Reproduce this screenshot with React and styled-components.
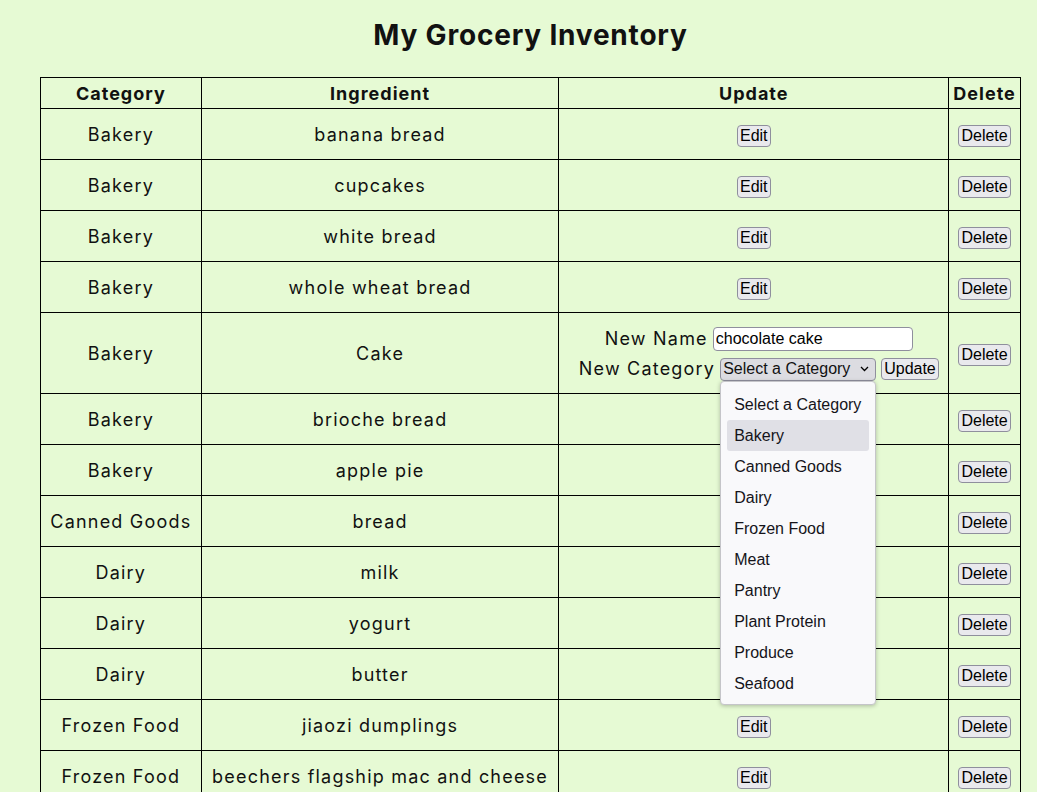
import React from "react"
import styled, { createGlobalStyle } from "styled-components"

const GlobalStyle = createGlobalStyle`
  html, body {
    margin: 0;
    overflow: hidden;
    background-color: #e6fad4;
  }
  body {
    font-family: "Inter", "Noto Sans", sans-serif;
    color: #111;
  }
`

const Page = styled.div`
  padding: 0 16px 0 40px;
`

const Title = styled.h1`
  font-size: 28px;
  font-weight: 700;
  line-height: 34px;
  margin: 18px 0 25px;
  text-align: center;
  letter-spacing: 0.8px;
`

const Table = styled.table`
  border-collapse: collapse;
  table-layout: fixed;
  font-size: 18px;
`

const Head = styled.th`
  border: 1px solid #000;
  font-weight: 700;
  line-height: 24px;
  padding: 4px 0 2px;
  letter-spacing: 1px;
  width: ${(p) => p.$w}px;
`

const Cell = styled.td`
  border: 1px solid #000;
  line-height: 24px;
  padding: 14px 0 12px;
  text-align: center;
  vertical-align: middle;
  white-space: nowrap;
  letter-spacing: 1.2px;
`

const NativeButton = styled.button`
  font-family: "Liberation Sans", Arial, sans-serif;
  font-size: 16px;
  line-height: 18px;
  letter-spacing: 0;
  color: #000;
  background-color: #e9e9ed;
  border: 1px solid #8f8f9d;
  border-radius: 4px;
  padding: 1px 2px;
  cursor: pointer;
`

const UpdateForm = styled.div`
  display: flex;
  flex-direction: column;
  align-items: center;
  gap: 6px;
`

const FieldRow = styled.div`
  display: flex;
  align-items: center;
  gap: 5px;
  padding-left: 10px;
`

const Label = styled.span`
  letter-spacing: 1.2px;
`

const TextInput = styled.input`
  width: 200px;
  height: 24px;
  box-sizing: border-box;
  font-family: "Liberation Sans", Arial, sans-serif;
  font-size: 16px;
  color: #000;
  background: #fff;
  border: 1px solid #8f8f9d;
  border-radius: 4px;
  padding: 0 2px;
`

const SelectWrap = styled.div`
  position: relative;
`

const SelectBox = styled.div`
  width: 156px;
  height: 23px;
  box-sizing: border-box;
  display: flex;
  align-items: center;
  justify-content: space-between;
  padding: 0 6px 0 2px;
  font-family: "Liberation Sans", Arial, sans-serif;
  font-size: 16px;
  letter-spacing: 0;
  background-color: #dcdce1;
  border: 1px solid #8f8f9d;
  border-radius: 4px;
`

const Popup = styled.ul`
  position: absolute;
  top: 23px;
  left: 0;
  width: 156px;
  box-sizing: border-box;
  margin: 0;
  padding: 7px 6px 5px;
  list-style: none;
  background: #f9f9fb;
  border: 1px solid #c5c5c9;
  border-radius: 4px;
  box-shadow: 0 1px 4px rgba(0, 0, 0, 0.25);
  z-index: 5;
  text-align: left;
`

const Option = styled.li`
  height: 31px;
  line-height: 31px;
  padding-left: 7px;
  border-radius: 3px;
  font-family: "Liberation Sans", Arial, sans-serif;
  font-size: 16px;
  letter-spacing: 0;
  color: #15141a;
  background: ${(p) => (p.$active ? "#e0e0e6" : "transparent")};
`

const categories = [
  "Select a Category",
  "Bakery",
  "Canned Goods",
  "Dairy",
  "Frozen Food",
  "Meat",
  "Pantry",
  "Plant Protein",
  "Produce",
  "Seafood",
]

const items = [
  { category: "Bakery", name: "banana bread" },
  { category: "Bakery", name: "cupcakes" },
  { category: "Bakery", name: "white bread" },
  { category: "Bakery", name: "whole wheat bread" },
  { category: "Bakery", name: "Cake", editing: true },
  { category: "Bakery", name: "brioche bread" },
  { category: "Bakery", name: "apple pie" },
  { category: "Canned Goods", name: "bread" },
  { category: "Dairy", name: "milk" },
  { category: "Dairy", name: "yogurt" },
  { category: "Dairy", name: "butter" },
  { category: "Frozen Food", name: "jiaozi dumplings" },
  { category: "Frozen Food", name: "beechers flagship mac and cheese" },
  { category: "Meat", name: "chicken thighs" },
]

function Chevron() {
  return (
    <svg width="9" height="6" viewBox="0 0 9 6">
      <path d="M1 1l3.5 3.5L8 1" fill="none" stroke="#000" strokeWidth="1.3" />
    </svg>
  )
}

function EditForm() {
  return (
    <UpdateForm>
      <FieldRow>
        <Label>New Name</Label>
        <TextInput defaultValue="chocolate cake" />
      </FieldRow>
      <FieldRow>
        <Label>New Category</Label>
        <SelectWrap>
          <SelectBox>
            <span>Select a Category</span>
            <Chevron />
          </SelectBox>
          <Popup>
            {categories.map((c) => (
              <Option key={c} $active={c === "Bakery"}>
                {c}
              </Option>
            ))}
          </Popup>
        </SelectWrap>
        <NativeButton>Update</NativeButton>
      </FieldRow>
    </UpdateForm>
  )
}

export default function App() {
  return (
    <Page>
      <GlobalStyle />
      <Title>My Grocery Inventory</Title>
      <Table>
        <thead>
          <tr>
            <Head $w={160}>Category</Head>
            <Head $w={357}>Ingredient</Head>
            <Head $w={389}>Update</Head>
            <Head $w={71}>Delete</Head>
          </tr>
        </thead>
        <tbody>
          {items.map((item, i) => (
            <tr key={i}>
              <Cell>{item.category}</Cell>
              <Cell>{item.name}</Cell>
              <Cell>{item.editing ? <EditForm /> : <NativeButton>Edit</NativeButton>}</Cell>
              <Cell>
                <NativeButton>Delete</NativeButton>
              </Cell>
            </tr>
          ))}
        </tbody>
      </Table>
    </Page>
  )
}
